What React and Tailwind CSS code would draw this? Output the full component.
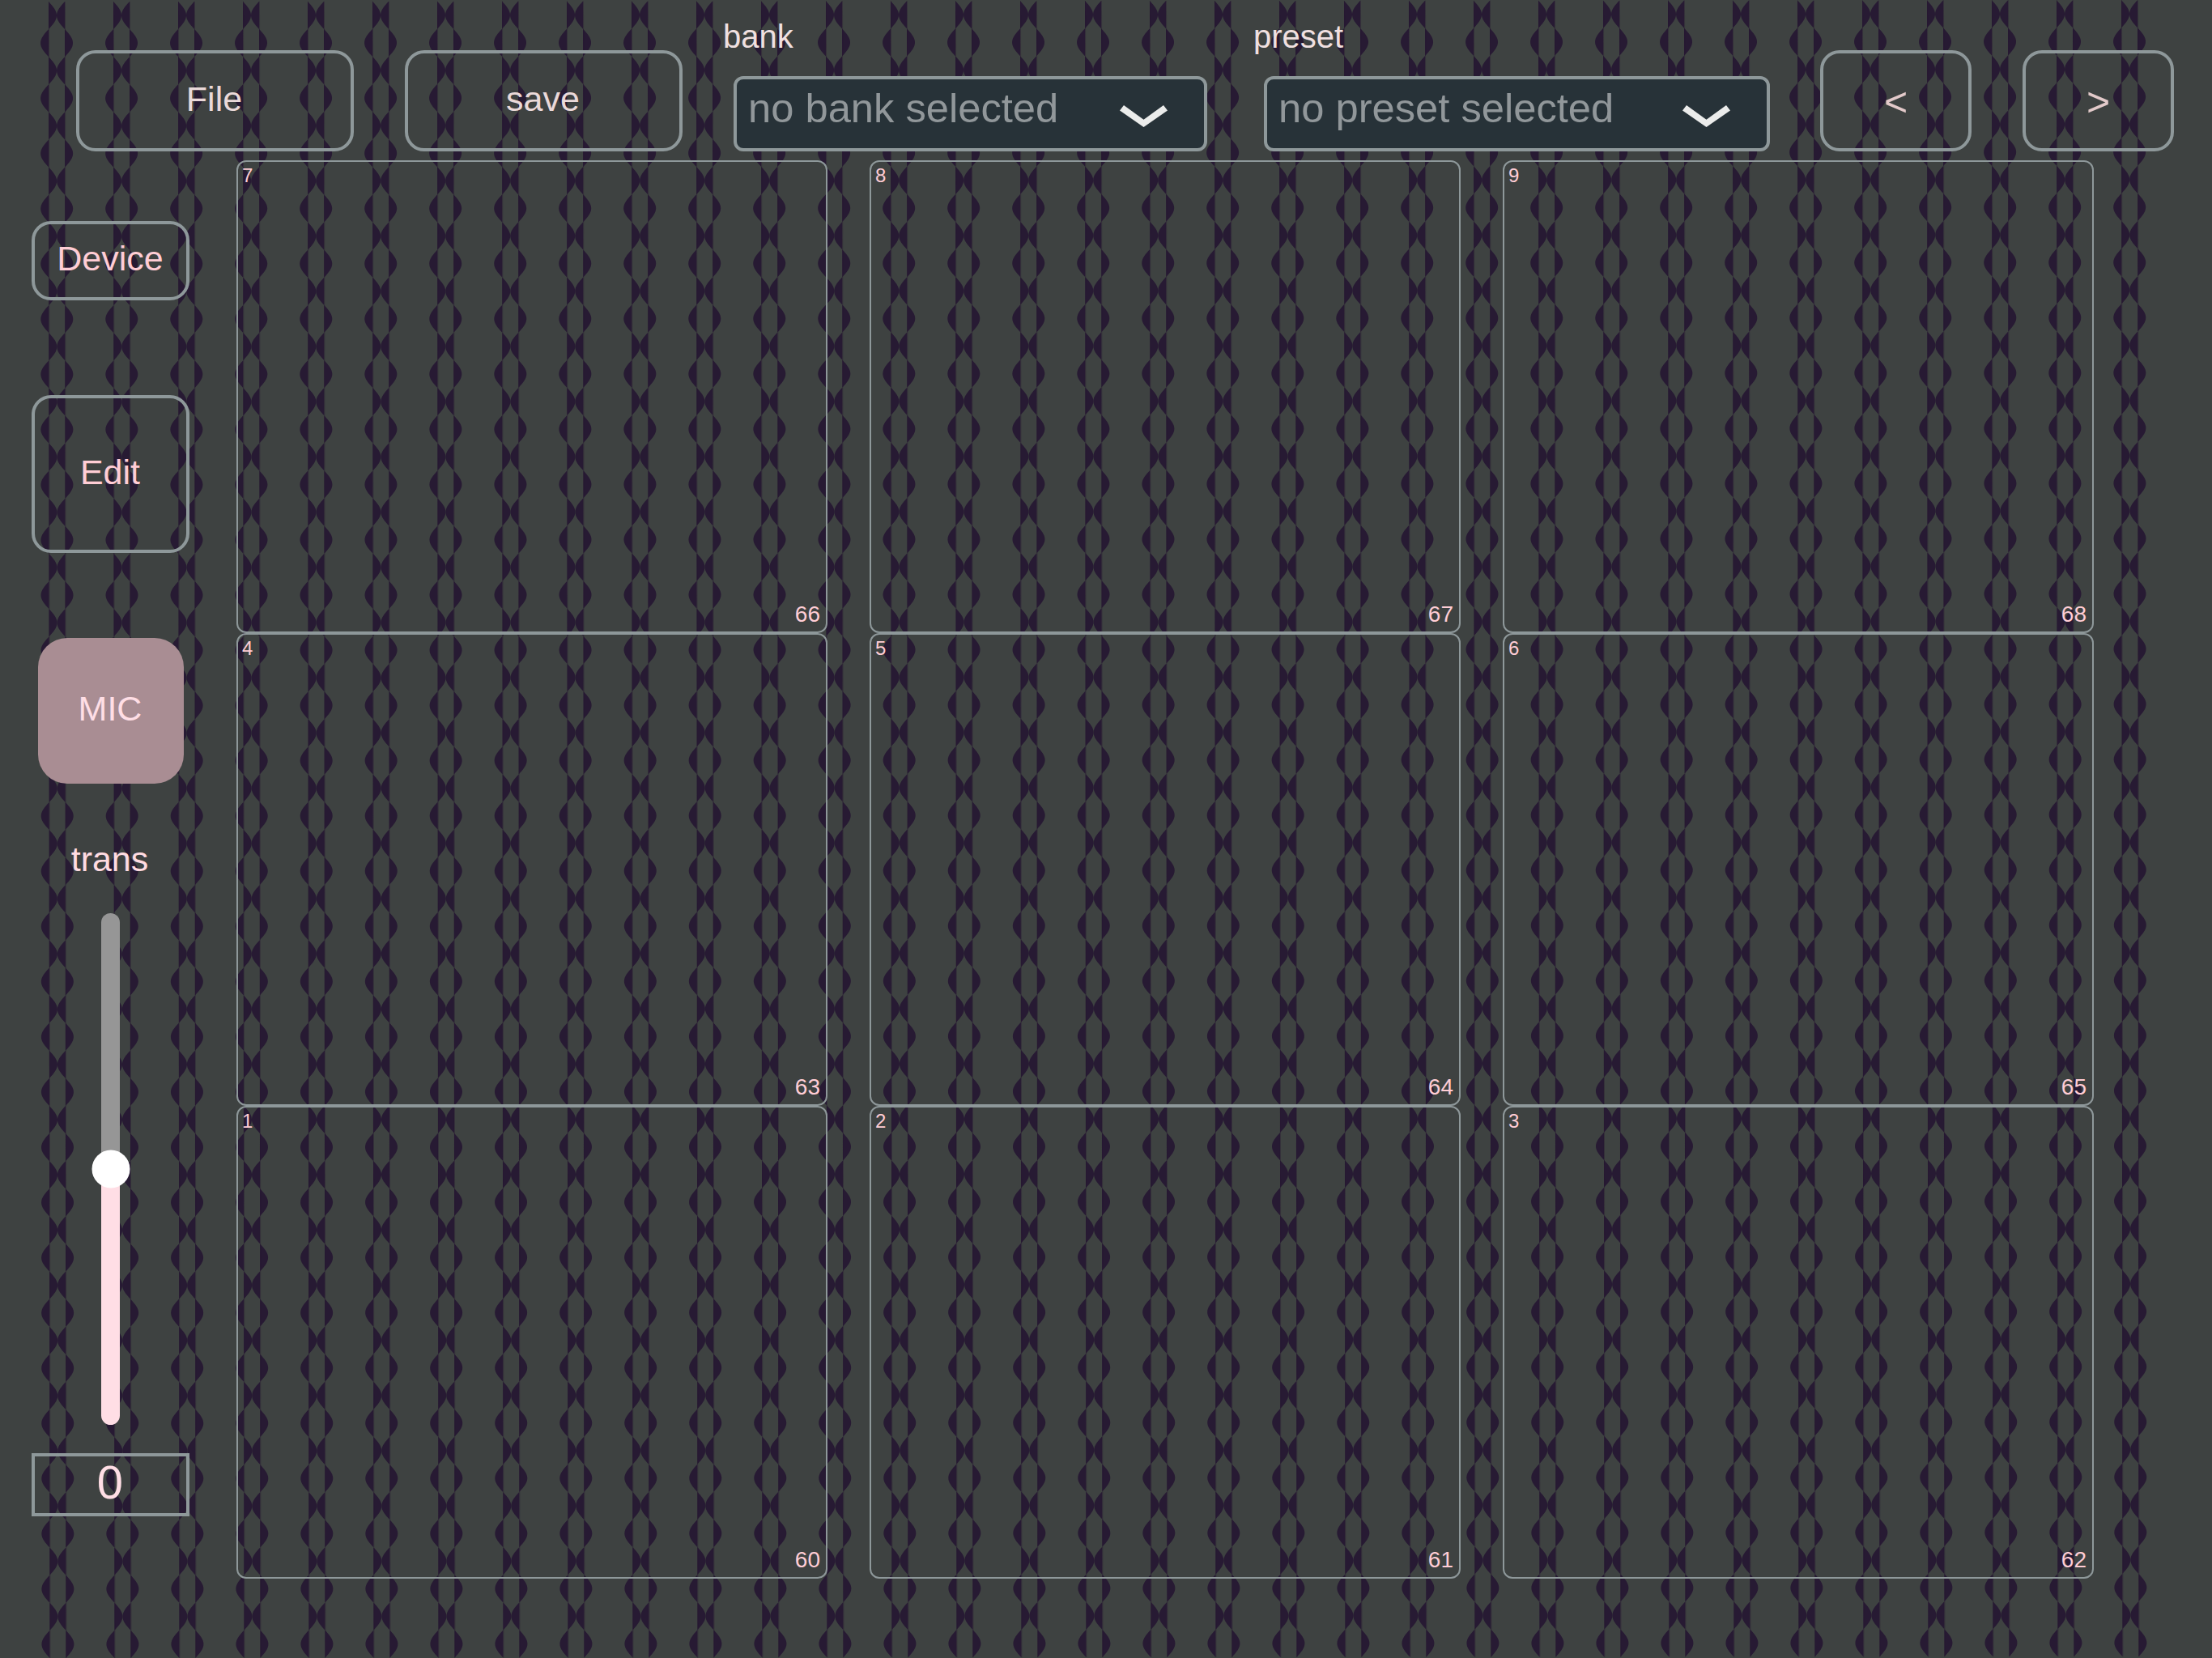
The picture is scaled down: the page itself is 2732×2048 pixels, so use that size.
const COLUMNS = Array.from({ length: 33 }, (_, i) => 60 + i * 80);

const PADS = [
  { key: 7, note: 66 },
  { key: 8, note: 67 },
  { key: 9, note: 68 },
  { key: 4, note: 63 },
  { key: 5, note: 64 },
  { key: 6, note: 65 },
  { key: 1, note: 60 },
  { key: 2, note: 61 },
  { key: 3, note: 62 },
];

const HALF_WAVE = 34.1;
const WAVE_LENGTH = HALF_WAVE * 60;

// filled sine wave along a vertical axis, side is 1 or -1
function wavePath(axis, side) {
  const points = [];
  for (let i = 0; i <= 960; i++) {
    const x = axis + side * 10 * Math.sin((Math.PI * i) / 16);
    points.push(`${x.toFixed(2)} ${((i * HALF_WAVE) / 16).toFixed(2)}`);
  }
  return `M${axis} 0L${points.join("L")}L${axis} ${WAVE_LENGTH}Z`;
}

const LEFT_WAVE = wavePath(0, 1);
const RIGHT_WAVE = wavePath(20, -1);

function WaveBackground() {
  return (
    <svg
      className="absolute inset-0"
      width="2732"
      height="2048"
      viewBox="0 0 2732 2048"
      fill="#271a33"
    >
      <g transform="rotate(-0.04 60 2)">
        {COLUMNS.map((x) => (
          <g key={x} transform={`translate(${x} 2)`}>
            <path d={LEFT_WAVE} />
            <path d={RIGHT_WAVE} />
            <path
              d={`M0.5 0V${WAVE_LENGTH}M20.5 0V${WAVE_LENGTH}`}
              stroke="#271a33"
              strokeOpacity="0.4"
              strokeWidth="1"
            />
          </g>
        ))}
      </g>
    </svg>
  );
}

function Button({ className, children }) {
  return (
    <button
      className={`flex shrink-0 items-center justify-center rounded-[24px] border-4 border-[#8e989a] ${className}`}
    >
      {children}
    </button>
  );
}

function Select({ label, text, className }) {
  return (
    <div className={`shrink-0 ${className}`}>
      <div className="-ml-[13px] h-[88px] text-[40px] leading-[90px] text-[#f0e0e0]">
        {label}
      </div>
      <div className="mt-1.5 flex h-[93px] items-center justify-between rounded-[12px] border-4 border-[#8e989a] bg-[#273238] pr-[45px] pl-[14px]">
        <span className="pb-[12px] text-[50.7px] leading-none whitespace-nowrap text-[#91979a]">
          {text}
        </span>
        <svg
          className="mt-[6px]"
          width="59"
          height="27"
          viewBox="0 0 59 27"
          fill="#ebeceb"
        >
          <path d="M5 0L29.5 17.7L54 0L59 6.5L29.5 27L0 6.5Z" />
        </svg>
      </div>
    </div>
  );
}

function Header() {
  return (
    <header className="flex h-[198px] pl-[94px] text-[43px] text-[#ead9d9]">
      <Button className="mt-[62px] h-[125px] w-[343px] pr-[2px] pb-[5px]">
        File
      </Button>
      <Button className="mt-[62px] ml-[63px] h-[125px] w-[343px] pr-[2px] pb-[4px]">
        save
      </Button>
      <Select
        label="bank"
        text="no bank selected"
        className="ml-[63px] w-[585px]"
      />
      <Select
        label="preset"
        text="no preset selected"
        className="ml-[70px] w-[625px]"
      />
      <Button className="mt-[62px] ml-[62px] h-[125px] w-[187px] pt-[3px] text-[50px] text-[#e3caca]">
        &lt;
      </Button>
      <Button className="mt-[62px] ml-[63px] h-[125px] w-[187px] pt-[3px] text-[50px] text-[#e3caca]">
        &gt;
      </Button>
    </header>
  );
}

function Slider() {
  return (
    <div className="relative mx-auto flex h-[632px] w-[23px] flex-col">
      <div className="flex-1 rounded-t-full bg-[#969696]" />
      <div className="flex-1 rounded-b-full bg-[#ffdee5]" />
      <div className="absolute top-1/2 left-1/2 size-[47px] -translate-1/2 rounded-full bg-white" />
    </div>
  );
}

function Sidebar() {
  return (
    <aside className="ml-[39px] flex w-[195px] shrink-0 flex-col pt-[75px] text-[43px] text-[#ffcdd5]">
      <Button className="h-[98px] pr-[1px] pb-[5px]">Device</Button>
      <Button className="mt-[117px] h-[195px] pr-[1px] pb-[5px]">Edit</Button>
      <button className="mt-[105px] ml-2 flex size-[180px] shrink-0 items-center justify-center rounded-[36px] bg-[#a98d93] pr-[2px] pb-[6px] text-[#ffdee5]">
        MIC
      </button>
      <div className="h-[160px] pr-[2px] text-center leading-[186px] text-[#ffdbe1]">
        trans
      </div>
      <Slider />
      <div className="mt-[35px] flex h-[78px] items-center justify-center border-4 border-[#8e989a] pr-[1px] pb-[6px] text-[58px] leading-none text-[#ffdee5]">
        0
      </div>
    </aside>
  );
}

function Pad({ pad }) {
  return (
    <div className="flex h-[584px] flex-col justify-between rounded-[12px] border-2 border-[#8e989a] pt-[5px] pr-[7px] pb-[7px] pl-[5px] text-[#ffcdd5]">
      <span className="text-[24px] leading-[24px]">{pad.key}</span>
      <span className="text-right text-[28px] leading-[28px]">{pad.note}</span>
    </div>
  );
}

function App() {
  return (
    <div className="relative h-[2048px] w-[2732px] overflow-hidden bg-[#3e4241] font-['Liberation_Sans',Arial,sans-serif]">
      <WaveBackground />
      <div className="relative">
        <Header />
        <main className="flex">
          <Sidebar />
          <div className="ml-[58px] grid grid-cols-[730px_730px_730px] gap-x-[52px]">
            {PADS.map((pad) => (
              <Pad key={pad.key} pad={pad} />
            ))}
          </div>
        </main>
      </div>
    </div>
  );
}

export default App;
